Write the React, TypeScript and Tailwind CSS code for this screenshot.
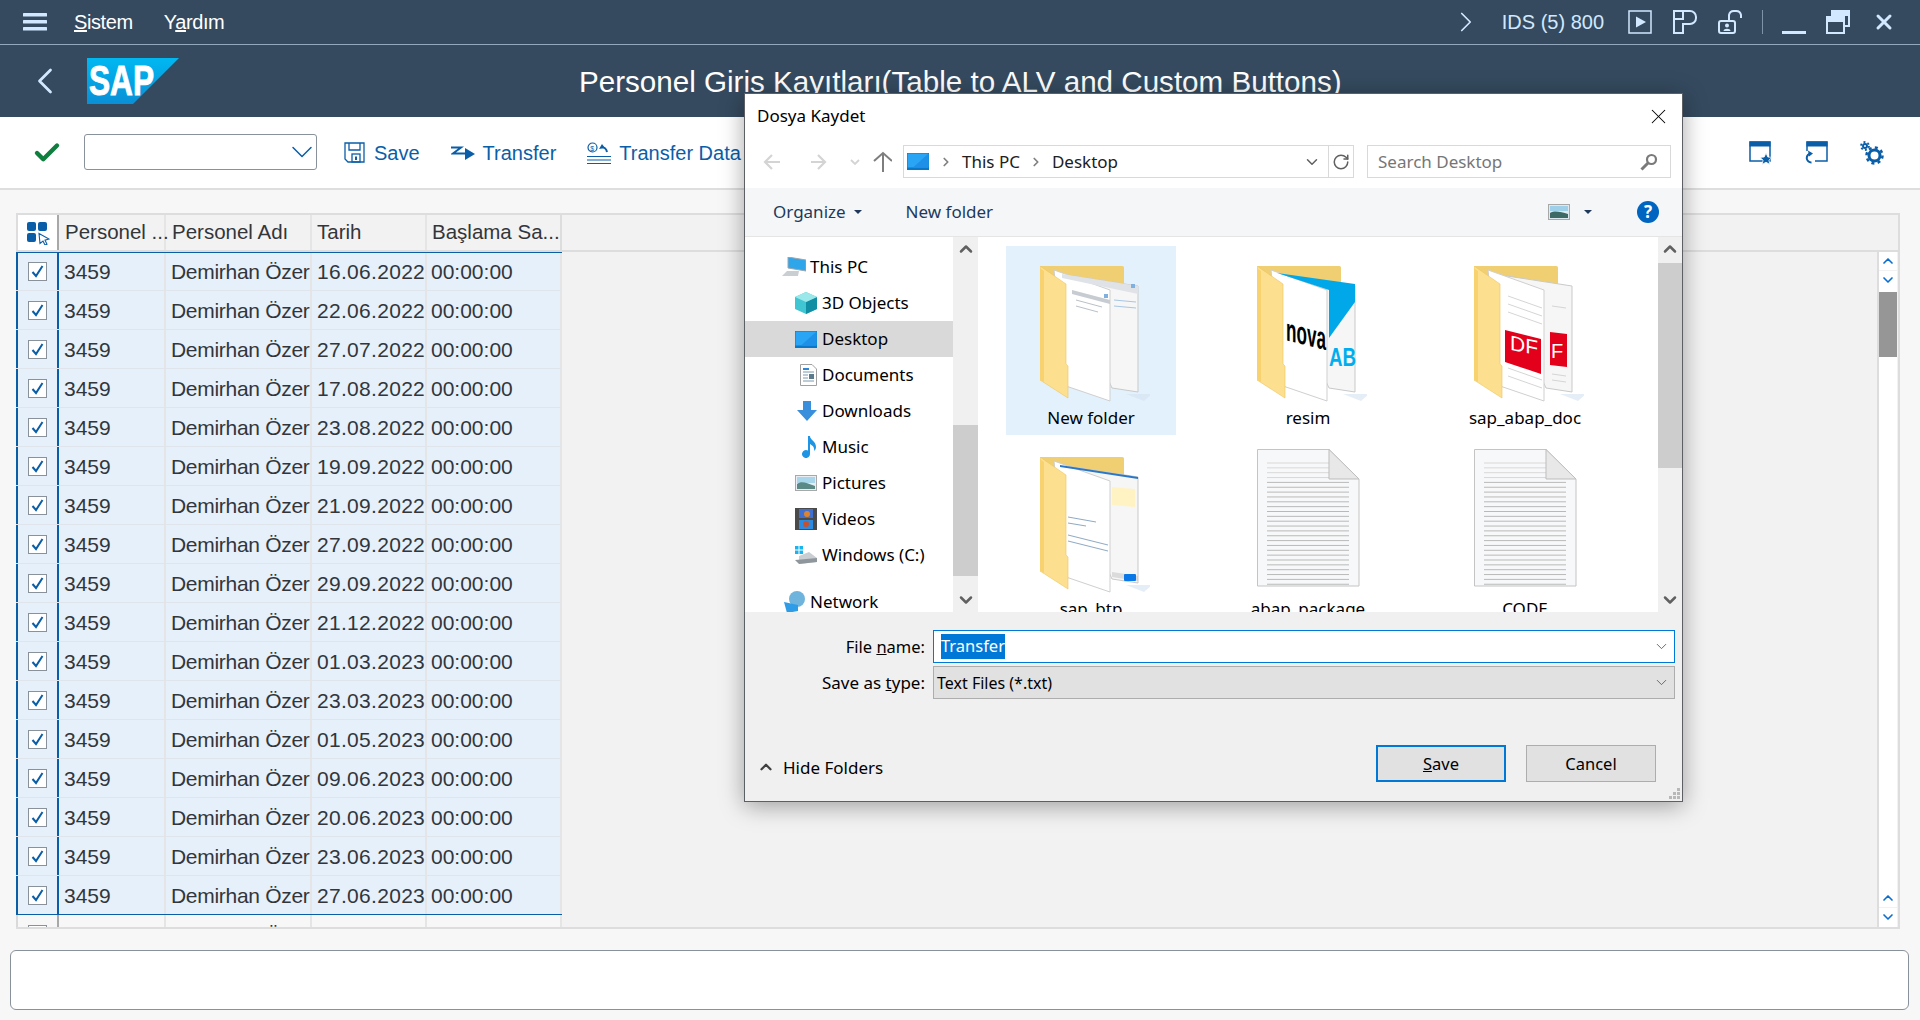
import { Check, ChevronDown, ChevronLeft, ChevronRight, ChevronUp, RotateCw, X } from "lucide-react";

const DATES = [
  "16.06.2022", "22.06.2022", "27.07.2022", "17.08.2022", "23.08.2022", "19.09.2022",
  "21.09.2022", "27.09.2022", "29.09.2022", "21.12.2022", "01.03.2023", "23.03.2023",
  "01.05.2023", "09.06.2023", "20.06.2023", "23.06.2023", "27.06.2023",
];

const SHELL = "#d1e8ff";

function Hamburger() {
  return (
    <svg width="24" height="18" viewBox="0 0 24 18" fill={SHELL}>
      <rect width="24" height="3.5" rx="0.5" />
      <rect y="7" width="24" height="3.5" rx="0.5" />
      <rect y="14" width="24" height="3.5" rx="0.5" />
    </svg>
  );
}

function PlayBox() {
  return (
    <svg width="24" height="24" viewBox="0 0 24 24" fill="none" stroke={SHELL} strokeWidth="1.5">
      <rect x="1" y="1" width="22" height="22" />
      <path d="M8 6.5 18 12 8 17.5Z" fill={SHELL} stroke="none" />
    </svg>
  );
}

function LayoutP() {
  return (
    <svg width="24" height="24" viewBox="0 0 24 24" fill="none" stroke={SHELL} strokeWidth="2">
      <path d="M1 23V9h9V1h7a6 6 0 0 1 6 6v1a6 6 0 0 1-6 6h-7v9Z" />
      <path d="M1 9V1h9" />
    </svg>
  );
}

function OpenLock() {
  return (
    <svg width="24" height="24" viewBox="0 0 24 24" fill="none" stroke={SHELL} strokeWidth="2">
      <rect x="1" y="11" width="16" height="12" rx="2" />
      <path d="M11 11V5a5 5 0 0 1 5-4h2a5 5 0 0 1 5 4v3" />
      <circle cx="9" cy="15.5" r="2" fill={SHELL} stroke="none" />
      <path d="M5.5 21c0-3 7-3 7 0Z" fill={SHELL} stroke="none" />
    </svg>
  );
}

function RestoreWin() {
  return (
    <svg width="24" height="24" viewBox="0 0 24 24" fill="none" stroke={SHELL} strokeWidth="2">
      <path d="M6 5V1h17v15h-4" />
      <path d="M6 1h17v4H6Z" fill={SHELL} />
      <rect x="1" y="7" width="17" height="16" />
      <path d="M1 7h17v4H1Z" fill={SHELL} />
    </svg>
  );
}

function SapLogo() {
  return (
    <svg width="92" height="46" viewBox="0 0 92 46">
      <defs>
        <linearGradient id="sapBlue" x1="0" y1="0" x2="0" y2="1">
          <stop offset="0" stopColor="#00b8f1" />
          <stop offset="1" stopColor="#0a8fd6" />
        </linearGradient>
      </defs>
      <path d="M0 0h92L46 46H0Z" fill="url(#sapBlue)" />
      <text
        x="2"
        y="37"
        fontFamily="'Liberation Sans', sans-serif"
        fontWeight="700"
        fontSize="43"
        textLength="65"
        lengthAdjust="spacingAndGlyphs"
        fill="#fff"
        stroke="#fff"
        strokeWidth="1"
      >
        SAP
      </text>
    </svg>
  );
}

function SaveIcon() {
  return (
    <svg width="21" height="21" viewBox="0 0 21 21" fill="none" stroke="#0a5ea8" strokeWidth="1.3">
      <path d="M1 1h19v19H4l-3-3Z" />
      <path d="M5 1v7h11V1" />
      <rect x="8" y="12" width="8" height="8" />
      <rect x="11" y="14.5" width="2" height="3.5" fill="#0a5ea8" stroke="none" />
    </svg>
  );
}

function TransferIcon() {
  return (
    <svg width="24" height="14" viewBox="0 0 24 14" fill="none" stroke="#0a5ea8" strokeWidth="2">
      <path d="M0 1.5h10L2 7.5h13" />
      <path d="M14 2 24 8 14 14Z" fill="#0a5ea8" stroke="none" />
    </svg>
  );
}

function TransferDataIcon() {
  return (
    <svg width="24" height="22" viewBox="0 0 24 22" fill="none" stroke="#0a5ea8" strokeWidth="1.2">
      <circle cx="5.5" cy="5.5" r="4.5" />
      <text x="3.2" y="8.5" fontSize="7" fontFamily="'Liberation Sans', sans-serif" fill="#0a5ea8" stroke="none">$</text>
      <path d="M14 5a6 6 0 0 1 6 5" strokeWidth="2" />
      <path d="M12 7l3-5 3 4Z" fill="#0a5ea8" stroke="none" />
      <path d="M0 14.5h24M0 18h24M0 21.500h24" />
    </svg>
  );
}

function WinStar() {
  return (
    <svg width="24" height="24" viewBox="0 0 24 24" fill="none" stroke="#0a5ea8" strokeWidth="1.5">
      <rect x="1" y="1" width="20" height="19" />
      <rect x="0.5" y="0.5" width="21" height="5" fill="#0a5ea8" stroke="none" />
      <path d="m17 12 1.8 4 4.2.4-3.100 2.800.9 4.200-3.800-2.200-3.800 2.200.9-4.200-3.100-2.800 4.200-.4Z" fill="#0a5ea8" stroke="#fff" strokeWidth="0.8" />
    </svg>
  );
}

function WinBack() {
  return (
    <svg width="24" height="24" viewBox="0 0 24 24" fill="none" stroke="#0a5ea8" strokeWidth="1.5">
      <path d="M2 10V1h20v19H10" />
      <rect x="1.5" y="0.5" width="21" height="5" fill="#0a5ea8" stroke="none" />
      <path d="M6 12.500a4 4 0 1 0 .5 9" strokeWidth="2" />
      <path d="m3 9.500 5 3-4 3Z" fill="#0a5ea8" stroke="none" />
    </svg>
  );
}

function Gears() {
  return (
    <svg width="24" height="24" viewBox="0 0 24 24" fill="none" stroke="#0a5ea8">
      <circle cx="14.5" cy="14.5" r="5.5" strokeWidth="3" />
      <circle cx="14.5" cy="14.5" r="8" strokeWidth="2.5" strokeDasharray="3 3.3" />
      <circle cx="5" cy="5" r="2" strokeWidth="2" />
      <circle cx="5" cy="5" r="4" strokeWidth="1.8" strokeDasharray="2 2.2" />
    </svg>
  );
}

function VariantIcon() {
  return (
    <svg width="24" height="24" viewBox="0 0 24 24">
      <rect x="1" y="1" width="9" height="9" rx="2" fill="#0a5ea8" />
      <rect x="12" y="1" width="9" height="9" rx="2" fill="#0a5ea8" />
      <rect x="1" y="12" width="9" height="9" rx="2" fill="#0a5ea8" />
      <path d="M13 12.500 23 18l-4 1.200 2 4-2 .8-2-4-3 2.500Z" fill="#fff" stroke="#0a5ea8" strokeWidth="1.1" />
    </svg>
  );
}

function RowCheck({ checked }: { checked: boolean }) {
  return (
    <span className="flex h-[19px] w-[19px] items-center justify-center border border-[#89919a] bg-white">
      {checked && (
        <svg width="13" height="13" viewBox="0 0 13 13" fill="none" stroke="#0a5ea8" strokeWidth="2">
          <path d="m1.500 7 3.500 4 6.500-10" />
        </svg>
      )}
    </span>
  );
}

function TableRow({ date, selected, first, last }: { date: string; selected: boolean; first?: boolean; last?: boolean }) {
  const cell = "flex h-full items-center overflow-hidden whitespace-nowrap border-r-2 border-[#e5e5e5] pt-[1px]";
  const frame = selected ? "bg-[#e5f0fa]" : "bg-[#f7f7f7]";
  const bottom = last ? "border-b border-b-[#0a5ea8]" : selected ? "border-b border-b-[#dfe5ea]" : "";
  const top = first ? "border-t border-t-[#0a5ea8]" : "";
  return (
    <div className={`flex h-[39px] shrink-0 ${frame} ${bottom} ${top}`}>
      <div className={selected ? "flex w-[43px] shrink-0 items-center justify-center border-l-2 border-r-2 border-l-[#0a5ea8] border-r-[#0a5ea8]" : "flex w-[43px] shrink-0 items-center justify-center border-l-2 border-r-2 border-l-[#d9d9d9] border-r-[#a8a8a8]"}>
        <RowCheck checked={selected} />
      </div>
      <div className={`${cell} w-[107px] pl-[5px]`}>3459</div>
      <div className={`${cell} w-[146px] pl-[5px] tracking-[-0.3px]`}>Demirhan Özer</div>
      <div className={`${cell} w-[115px] pl-[5px] tracking-[0.3px]`}>{date}</div>
      <div className={`${cell} w-[135px] pl-[4px]`}>00:00:00</div>
    </div>
  );
}

function Scroller() {
  const btn = "flex h-[18px] w-[18px] items-center justify-center bg-white text-[#0a6ed1]";
  return (
    <div className="flex h-full w-[18px] shrink-0 flex-col bg-white">
      <div className={btn}><ChevronUp size={16} strokeWidth={2.5} /></div>
      <div className="h-px bg-[#f2f2f2]" />
      <div className={btn}><ChevronDown size={16} strokeWidth={2.5} /></div>
      <div className="h-[3px] bg-white" />
      <div className="h-[65px] bg-[#969696]" />
      <div className="flex-1" />
      <div className={btn}><ChevronUp size={16} strokeWidth={2.5} /></div>
      <div className="h-px bg-[#f2f2f2]" />
      <div className={btn}><ChevronDown size={16} strokeWidth={2.5} /></div>
      <div className="h-[1px]" />
    </div>
  );
}

function Folder({ variant }: { variant: "window" | "nova" | "pdf" | "btp" }) {
  return (
    <svg width="110" height="136" viewBox="0 0 110 136">
      <path d="M0 2C0 0 1 0 3 0h79c2 0 2 1 2 3v28H0Z" fill="#f0cf72" />
      <path d="M86 128 104 135 112 128Z" fill="#d4e3f0" opacity="0.6" />
      <path d="M20 8 98 20V126L72 122Z" fill="#f6f6f6" stroke="#c9c9c9" />
      <path d="M14 4 70 24V135L26 120Z" fill="#ffffff" stroke="#cfcfcf" />
      {variant === "window" && (
        <g>
          <path d="M22 8 98 20v8L22 12Z" fill="#dfe3e8" />
          <path d="M32 24 70 34v4L32 28Z" fill="#c6ccd2" />
          <path d="M36 34 62 41M36 40 58 46" stroke="#b9c0c8" fill="none" />
          <path d="M74 34 96 36M74 40 96 42" stroke="#a8c6e4" fill="none" />
          <rect x="91" y="18" width="4" height="4" fill="#7fb0df" />
          <rect x="64" y="28" width="4" height="4" fill="#7fb0df" />
        </g>
      )}
      {variant === "nova" && (
        <g>
          <path d="M20 7 98 18V36L72 72V24Z" fill="#00a8ea" />
          <text x="72" y="100" fontFamily="'Liberation Sans', sans-serif" fontWeight="700" fontSize="25" fill="#00aeef" textLength="27" lengthAdjust="spacingAndGlyphs">AB</text>
          <g transform="skewY(14)">
            <text x="29" y="67" fontFamily="'Liberation Sans', sans-serif" fontWeight="700" fontSize="32" fill="#000" textLength="40" lengthAdjust="spacingAndGlyphs">nova</text>
          </g>
        </g>
      )}
      {variant === "pdf" && (
        <g>
          <path d="M34 30 68 42M34 38 68 50M34 46 68 58M34 102 68 114M34 110 68 122M78 40 92 42M78 108 92 110M78 114 92 116" stroke="#d5d5d5" fill="none" />
          <path d="M31 64 67 73V108L31 96Z" fill="#e2001a" />
          <path d="M76 66 93 68V101L76 99Z" fill="#e2001a" />
          <g transform="skewY(12)">
            <text x="36" y="76" fontFamily="'Liberation Sans', sans-serif" fontSize="21" fill="#fff">DF</text>
          </g>
          <text x="77" y="92" fontFamily="'Liberation Sans', sans-serif" fontSize="20" fill="#fff">F</text>
        </g>
      )}
      {variant === "btp" && (
        <g>
          <path d="M20 8 98 20v2L20 10Z" fill="#2b77c7" />
          <path d="M72 30 95 32V50L72 48Z" fill="#fff3c4" />
          <path d="M28 60 56 65M28 66 46 69M28 78 68 88M28 84 68 94" stroke="#8ea9c4" fill="none" />
          <path d="M72 115 98 119v5L72 120Z" fill="#bfbfbf" opacity="0.5" />
          <rect x="84" y="117" width="12" height="7" rx="1" fill="#0a78e6" />
        </g>
      )}
      <path d="M0 0 26 18V98L28 100V132L0 114Z" fill="#fde08f" stroke="#edc560" strokeWidth="0.6" />
      <path d="M0 2 4 5V116L0 114Z" fill="#f7d26f" />
    </svg>
  );
}

const DOC_LINES = Array.from({ length: 26 }, (_, i) => 14 + i * 4.85);

function TextDoc() {
  return (
    <svg className="-mt-[8px]" width="103" height="138" viewBox="0 0 103 138">
      <path d="M.5.500H72L102 30V137H.5Z" fill="#f7f8f9" stroke="#c4c4c4" />
      {DOC_LINES.map((y) => (
        <path key={y} d={`M10 ${y}H${y < 30 ? 72 : 92}`} stroke={y < 30 ? "#d8d8d8" : "#b9b9b9"} strokeWidth="1" />
      ))}
      <path d="M72 .5V30H102Z" fill="#e8e8e8" stroke="#bdbdbd" />
    </svg>
  );
}

function Tile({ name, selected, children }: { name: string; selected?: boolean; children: React.ReactNode }) {
  return (
    <div className={selected ? "flex h-[189px] w-[170px] flex-col items-center bg-[#e3f1fc] pt-[20px]" : "flex h-[189px] w-[170px] flex-col items-center pt-[20px]"}>
      <div className="h-[136px]">{children}</div>
      <div className="mt-[5px] text-[17px] leading-[22px] text-black">{name}</div>
    </div>
  );
}

function DesktopGlyph() {
  return (
    <svg width="22" height="17" viewBox="0 0 22 17">
      <rect width="22" height="17" fill="#0a78c8" />
      <rect x="0.5" y="0.5" width="21" height="14" fill="#2aa4f4" />
      <path d="M21 1 6 14.500H21Z" fill="#1e90e8" />
    </svg>
  );
}

function NavItem({ label, level, icon, active }: { label: string; level: 0 | 1; icon: React.ReactNode; active?: boolean }) {
  return (
    <div className={active ? "flex h-[36px] items-center bg-[#d9d9d9]" : "flex h-[36px] items-center"}>
      <div className={level === 0 ? "flex w-[65px] shrink-0 justify-end pr-[4px]" : "flex w-[77px] shrink-0 justify-end pr-[5px]"}>{icon}</div>
      <span className="text-[17px] text-black">{label}</span>
    </div>
  );
}

function WinScrollbar({ thumbClass }: { thumbClass: string }) {
  return (
    <div className="flex h-full flex-col bg-[#f0f0f0]">
      <div className="flex h-[24px] shrink-0 items-center justify-center text-[#606060]"><ChevronUp size={20} strokeWidth={3} /></div>
      <div className={thumbClass} />
      <div className="flex-1" />
      <div className="flex h-[24px] shrink-0 items-center justify-center text-[#606060]"><ChevronDown size={20} strokeWidth={3} /></div>
    </div>
  );
}

function SaveDialog() {
  return (
    <div className="absolute left-[744px] top-[93px] flex h-[709px] w-[939px] flex-col border border-[#5c5f63] bg-[#f0f0f0] font-['Noto_Sans',sans-serif] shadow-[0_4px_22px_rgba(0,0,0,0.35)]">
      {/* Title */}
      <div className="flex h-[44px] shrink-0 items-center justify-between bg-white pl-[12px] pr-[11px] text-[17px] text-black">
        <span>Dosya Kaydet</span>
        <X size={25} strokeWidth={1} />
      </div>
      {/* Address row */}
      <div className="flex h-[50px] shrink-0 items-start bg-white pr-[11px] pt-[7px]">
        <div className="flex h-[33px] w-[147px] shrink-0 items-center">
          <svg width="147" height="24" viewBox="0 0 147 24" fill="none">
            <path d="M21 12H35M27 5l-7 7 7 7" stroke="#d4d4d4" strokeWidth="2.2" />
            <path d="M66 12H80M73 5l7 7-7 7" stroke="#d4d4d4" strokeWidth="2.2" />
            <path d="M106 10l4 4 4-4" stroke="#d4d4d4" strokeWidth="1.8" />
            <path d="M138 22V4M129 11l9-8 9 8" stroke="#7e7e7e" strokeWidth="2" />
          </svg>
        </div>
        <div className="ml-[11px] flex h-[33px] w-[451px] shrink-0 items-center border border-[#d9d9d9] text-[17px] text-[#202020]">
          <span className="ml-[3px]"><DesktopGlyph /></span>
          <ChevronRight size={14} strokeWidth={3} className="ml-[10px] text-[#808080]" />
          <span className="ml-[9px]">This PC</span>
          <ChevronRight size={14} strokeWidth={3} className="ml-[9px] text-[#808080]" />
          <span className="ml-[9px]">Desktop</span>
          <div className="flex-1" />
          <ChevronDown size={18} className="text-[#606060]" />
          <div className="ml-[7px] mr-[3px] h-full w-px bg-[#d9d9d9]" />
          <RotateCw size={18} className="mr-[3px] text-[#606060]" />
        </div>
        <div className="ml-[13px] flex h-[33px] flex-1 items-center justify-between border border-[#d9d9d9] pl-[10px] pr-[12px] text-[17px] text-[#767676]">
          <span>Search Desktop</span>
          <svg width="18" height="18" viewBox="0 0 18 18" fill="none" stroke="#7a7a7a">
            <circle cx="11.5" cy="6.5" r="4.5" strokeWidth="2.2" />
            <path d="M8 10 1.500 16.500" strokeWidth="3" />
          </svg>
        </div>
      </div>
      {/* Command bar */}
      <div className="flex h-[49px] shrink-0 items-center border-b border-[#e5e5e5] bg-[#f5f6f7] text-[17px] text-[#1e395b]">
        <span className="ml-[28px]">Organize</span>
        <span className="ml-[8px] h-0 w-0 border-x-[4px] border-t-[4px] border-x-transparent border-t-[#1e395b]" />
        <span className="ml-[44px]">New folder</span>
        <div className="flex-1" />
        <svg width="22" height="16" viewBox="0 0 22 16">
          <rect x="0.5" y="0.5" width="21" height="15" fill="#dfe9f2" stroke="#a8a8a8" />
          <rect x="2" y="2" width="18" height="5" fill="#9fd0ea" />
          <path d="M2 9c5-3 11-1 18 1v4H2Z" fill="#3e6a66" />
        </svg>
        <span className="ml-[14px] mr-[45px] h-0 w-0 border-x-[4px] border-t-[4px] border-x-transparent border-t-[#1e395b]" />
        <span className="mr-[23px] flex h-[22px] w-[22px] items-center justify-center rounded-full bg-[#0064c1] text-[17px] font-bold text-white">?</span>
      </div>
      {/* Panes */}
      <div className="flex h-[375px] shrink-0">
        <div className="w-[208px] shrink-0 overflow-hidden bg-white pt-[12px]">
          <NavItem label="This PC" level={0} icon={
            <svg width="24" height="20" viewBox="0 0 24 20">
              <path d="M6 0 24 3V14L6 11Z" fill="#2fa5ea" stroke="#9aa7b0" />
              <path d="M0 19 5 14H17L16 19Z" fill="#c9ced3" />
            </svg>
          } />
          <NavItem label="3D Objects" level={1} icon={
            <svg width="22" height="22" viewBox="0 0 22 22">
              <path d="M11 0 22 5V17L11 22 0 17V5Z" fill="#3fc6d2" />
              <path d="M11 10 22 5V17L11 22Z" fill="#108fa4" />
              <path d="M11 0 22 5 11 10 0 5Z" fill="#9be8ea" />
            </svg>
          } />
          <NavItem label="Desktop" level={1} active icon={<DesktopGlyph />} />
          <NavItem label="Documents" level={1} icon={
            <svg width="17" height="22" viewBox="0 0 17 22" fill="none">
              <path d="M.5.500H12L16.500 5V21.500H.5Z" fill="#fff" stroke="#a0a0a0" />
              <path d="M3 8h11M3 11h5M3 14h5M3 17h11" stroke="#7c98b0" />
              <path d="M3 5h6" stroke="#2f86d6" strokeWidth="2" />
              <rect x="9" y="10" width="5" height="5" fill="#5b7a8c" />
            </svg>
          } />
          <NavItem label="Downloads" level={1} icon={
            <svg width="20" height="20" viewBox="0 0 20 20">
              <path d="M6 0H14V9H20L10 20 0 9H6Z" fill="#3a8fdc" />
            </svg>
          } />
          <NavItem label="Music" level={1} icon={
            <svg width="16" height="22" viewBox="0 0 16 22">
              <path d="M7 0h2c0 4 6 5 6 11 0 2-1 3-2 4 1-5-3-6-4-7V18a4 4 0 1 1-2-3.400Z" fill="#1e94e4" />
            </svg>
          } />
          <NavItem label="Pictures" level={1} icon={
            <svg width="22" height="16" viewBox="0 0 22 16">
              <rect x="0.5" y="0.5" width="21" height="15" fill="#e8eef3" stroke="#a8a8a8" />
              <rect x="2" y="2" width="18" height="6" fill="#a9d6ea" />
              <path d="M2 9c4-3 8-2 18 2v3H2Z" fill="#5b8a86" />
            </svg>
          } />
          <NavItem label="Videos" level={1} icon={
            <svg width="22" height="22" viewBox="0 0 22 22">
              <rect width="22" height="22" fill="#4a4a4a" />
              <rect x="4" y="1" width="14" height="9" fill="#3f6fd0" />
              <rect x="4" y="12" width="14" height="9" fill="#2c8ae0" />
              <circle cx="12" cy="6" r="3" fill="#e0842c" />
              <circle cx="11" cy="16" r="3" fill="#c8502c" />
            </svg>
          } />
          <NavItem label="Windows (C:)" level={1} icon={
            <svg width="22" height="18" viewBox="0 0 22 18">
              <path d="M0 0h3.500v3.500H0ZM4.500 0H8v3.500H4.500ZM0 4.500h3.500V8H0ZM4.500 4.500H8V8H4.500Z" fill="#18b4f0" />
              <path d="M4 10 14 6 22 12V16L4 18Z" fill="#c9ced3" />
              <path d="M0 14 22 12V16L4 18Z" fill="#8f979d" />
            </svg>
          } />
          <div className="mt-[11px]">
            <NavItem label="Network" level={0} icon={
              <svg width="22" height="22" viewBox="0 0 22 22">
                <circle cx="13" cy="8" r="8" fill="#6fb4dc" />
                <path d="M0 11 14 14V20L3 22Z" fill="#2f9ce8" />
              </svg>
            } />
          </div>
        </div>
        <div className="w-[25px] shrink-0">
          <WinScrollbar thumbClass="mt-[164px] h-[151px] shrink-0 bg-[#cdcdcd]" />
        </div>
        <div className="w-[4px] shrink-0 bg-white" />
        <div className="flex-1 overflow-hidden bg-white pl-[24px] pt-[9px]">
          <div className="grid grid-cols-[170px_170px_170px] gap-x-[47px] gap-y-[2px]">
            <Tile name="New folder" selected><div className="ml-[8px]"><Folder variant="window" /></div></Tile>
            <Tile name="resim"><div className="ml-[8px]"><Folder variant="nova" /></div></Tile>
            <Tile name="sap_abap_doc"><div className="ml-[8px]"><Folder variant="pdf" /></div></Tile>
            <Tile name="sap_btp"><div className="ml-[8px]"><Folder variant="btp" /></div></Tile>
            <Tile name="abap_package"><TextDoc /></Tile>
            <Tile name="CODE"><TextDoc /></Tile>
          </div>
        </div>
        <div className="w-[24px] shrink-0">
          <WinScrollbar thumbClass="mt-[2px] h-[205px] shrink-0 bg-[#cdcdcd]" />
        </div>
      </div>
      {/* File fields */}
      <div className="mt-[18px] flex h-[33px] shrink-0 items-center pr-[7px] text-[16.5px] text-black">
        <span className="w-[180px] shrink-0 pt-[1px] text-right">File <span className="underline">n</span>ame:</span>
        <div className="ml-[8px] flex h-[33px] flex-1 items-center border border-[#0078d7] bg-white pl-[7px] pr-[4px]">
          <span className="flex h-[25px] items-center bg-[#0078d7] text-white">Transfer</span>
          <div className="flex-1" />
          <ChevronDown size={17} strokeWidth={1.3} className="text-[#606060]" />
        </div>
      </div>
      <div className="mt-[3px] flex h-[33px] shrink-0 items-center pr-[7px] text-[16px] text-black">
        <span className="w-[180px] shrink-0 pt-[1px] text-right text-[17px]">Save as <span className="underline">t</span>ype:</span>
        <div className="ml-[8px] flex h-[33px] flex-1 items-center border border-[#adadad] bg-[#e1e1e1] pl-[3px] pr-[4px]">
          <span className="pt-[1px]">Text Files (*.txt)</span>
          <div className="flex-1" />
          <ChevronDown size={17} strokeWidth={1.3} className="text-[#606060]" />
        </div>
      </div>
      {/* Buttons */}
      <div className="mt-[46px] flex shrink-0 items-center pr-[26px] text-[16.5px] text-black">
        <ChevronUp size={18} strokeWidth={3} className="ml-[12px] mt-[7px] text-[#404040]" />
        <span className="ml-[8px] mt-[8px] text-[17px]">Hide Folders</span>
        <div className="flex-1" />
        <span className="flex h-[37px] w-[130px] items-center justify-center border-2 border-[#0078d7] bg-[#e1e1e1] pt-[1px]"><span><span className="underline">S</span>ave</span></span>
        <span className="ml-[20px] flex h-[37px] w-[130px] items-center justify-center border border-[#adadad] bg-[#e1e1e1] pt-[1px]">Cancel</span>
      </div>
      <svg className="absolute bottom-[1px] right-[1px]" width="12" height="12" viewBox="0 0 12 12" fill="#b8b8b8">
        <rect x="8" y="0" width="3" height="3" />
        <rect x="4" y="4" width="3" height="3" />
        <rect x="8" y="4" width="3" height="3" />
        <rect x="0" y="8" width="3" height="3" />
        <rect x="4" y="8" width="3" height="3" />
        <rect x="8" y="8" width="3" height="3" />
      </svg>
    </div>
  );
}

export default function App() {
  return (
    <div className="relative flex h-[1020px] w-[1920px] flex-col overflow-hidden bg-[#f7f7f7] font-['Liberation_Sans',Arial,sans-serif] text-[#32363a]">
      {/* Shell menu bar */}
      <div className="flex h-[45px] shrink-0 items-center border-b border-[#93a7bd] bg-[#354a5f] text-white">
        <div className="ml-[23px]"><Hamburger /></div>
        <span className="ml-[27px] text-[20px] tracking-[-0.4px]"><span className="underline">S</span>istem</span>
        <span className="ml-[31px] text-[20px] tracking-[-0.4px]">Y<span className="underline">a</span>rdım</span>
        <div className="flex-1" />
        <ChevronRight size={34} strokeWidth={1.2} className="text-[#d1e8ff]" />
        <span className="ml-[19px] text-[20px] text-[#d1e8ff]">IDS (5) 800</span>
        <div className="ml-[24px] flex items-center gap-[21px]">
          <PlayBox />
          <LayoutP />
          <OpenLock />
        </div>
        <div className="ml-[20px] h-[24px] w-px bg-[#7f93a8]" />
        <div className="ml-[19px] mt-[21px] h-[3px] w-[24px] bg-[#d1e8ff]" />
        <div className="ml-[20px]"><RestoreWin /></div>
        <X size={24} strokeWidth={3} className="ml-[22px] mr-[24px] text-[#d1e8ff]" />
      </div>
      {/* Title bar */}
      <div className="relative flex h-[72px] shrink-0 items-center bg-[#354a5f]">
        <ChevronLeft size={44} strokeWidth={1.5} className="ml-[23px] text-[#d1e8ff]" />
        <div className="ml-[20px] flex"><SapLogo /></div>
        <span className="ml-[400px] mt-[3px] whitespace-nowrap text-[29.6px] text-white">Personel Giris Kayıtları(Table to ALV and Custom Buttons)</span>
      </div>
      {/* Toolbar */}
      <div className="flex h-[73px] shrink-0 items-center border-b-2 border-[#dedede] bg-white text-[20px] text-[#0a5ea8]">
        <Check size={30} strokeWidth={3.5} className="ml-[32px] text-[#107e3e]" />
        <div className="mb-[2px] ml-[22px] flex h-[36px] w-[233px] items-center justify-end rounded-[3px] border border-[#89919a]">
          <ChevronDown size={36} strokeWidth={1} className="-mr-[4px] text-[#0a5ea8]" />
        </div>
        <div className="ml-[27px] flex"><SaveIcon /></div>
        <span className="ml-[9px]">Save</span>
        <div className="ml-[31px] flex"><TransferIcon /></div>
        <span className="ml-[8px]">Transfer</span>
        <div className="ml-[31px] flex"><TransferDataIcon /></div>
        <span className="ml-[8px]">Transfer Data</span>
        <div className="flex-1" />
        <WinStar />
        <div className="ml-[32px]"><WinBack /></div>
        <div className="ml-[31px] mr-[36px]"><Gears /></div>
      </div>
      {/* Table area */}
      <div className="flex min-h-0 flex-1 flex-col px-[16px] pt-[23px]">
        <div className="flex h-[716px] w-[1884px] shrink-0 flex-col overflow-hidden border-y-2 border-r-2 border-[#dddddd] bg-[#f2f2f2] text-[21px]">
          <div className="flex h-[37px] shrink-0 border-b-2 border-[#dddddd] text-[20.5px]">
            <div className="flex w-[43px] shrink-0 items-center justify-center border-l-2 border-r-2 border-l-[#dddddd] border-r-[#a8a8a8] bg-white"><VariantIcon /></div>
            <div className="flex w-[107px] items-center border-r-2 border-[#e5e5e5] pl-[6px] whitespace-nowrap">Personel ...</div>
            <div className="flex w-[146px] items-center border-r-2 border-[#e5e5e5] pl-[6px] whitespace-nowrap">Personel Adı</div>
            <div className="flex w-[115px] items-center border-r-2 border-[#e5e5e5] pl-[5px]">Tarih</div>
            <div className="flex w-[135px] items-center border-r-2 border-[#dddddd] pl-[5px] whitespace-nowrap">Başlama Sa...</div>
          </div>
          <div className="flex min-h-0 flex-1">
            <div className="flex w-[546px] shrink-0 flex-col overflow-hidden">
              {DATES.map((d, i) => (
                <TableRow key={d} date={d} selected first={i === 0} last={i === DATES.length - 1} />
              ))}
              <TableRow date="30.06.2023" selected={false} />
            </div>
            <div className="flex-1 border-r-2 border-[#dddddd]" />
            <div className="mr-[1px] h-full"><Scroller /></div>
          </div>
        </div>
        <div className="ml-[-6px] mt-[21px] h-[60px] w-[1899px] shrink-0 rounded-[6px] border border-[#89919a] bg-white" />
      </div>
      <SaveDialog />
    </div>
  );
}
